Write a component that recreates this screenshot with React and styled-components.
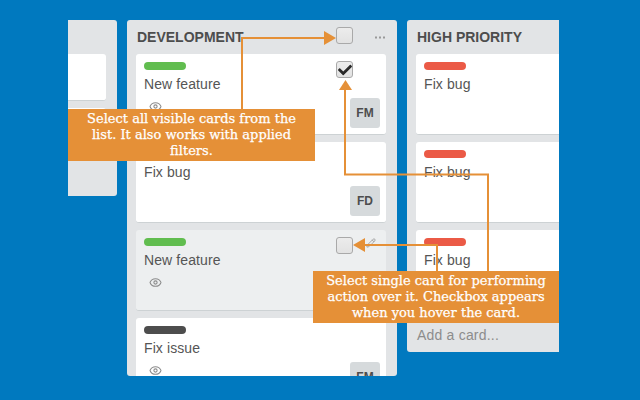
import React from "react";
import styled, { createGlobalStyle } from "styled-components";
import { FaCheck } from "react-icons/fa";
import { Eye, Pencil } from "lucide-react";

const GlobalStyle = createGlobalStyle`
    html, body {
        margin: 0;
        padding: 0;
        background: #0079bf;
    }
`;

const Stage = styled.div`
    position: relative;
    width: 640px;
    height: 400px;
    padding: 20px 0 0 68px;
    box-sizing: border-box;
    overflow: hidden;
    background: #0079bf;
    font-family: "Liberation Sans", Arial, sans-serif;
`;

const Board = styled.div`
    display: flex;
    align-items: flex-start;
    gap: 10px;
    width: 491px;
    height: 356px;
    overflow: hidden;
`;

const List = styled.section`
    flex: none;
    width: 270px;
    height: ${(p) => p.$height}px;
    margin-left: ${(p) => p.$offset || 0}px;
    border-radius: 3px;
    background: #e2e4e6;
    overflow: hidden;
`;

const ListHeader = styled.header`
    display: flex;
    align-items: center;
    height: 34px;
    padding: 0 12px 0 10px;
`;

const ListTitle = styled.h2`
    margin: 0;
    font-size: 14px;
    font-weight: bold;
    color: #4d4d4d;
`;

const Dots = styled.svg`
    width: 10px;
    height: 3px;
    margin-left: 22px;
    fill: #999;
`;

const Cards = styled.div`
    display: flex;
    flex-direction: column;
    gap: 7px;
    padding: 0 11px 0 9px;
`;

const Card = styled.article`
    position: relative;
    height: ${(p) => p.$height || 81}px;
    flex: none;
    padding: 8px;
    box-sizing: border-box;
    border-radius: 3px;
    border-bottom: 1px solid #cdd2d4;
    background: ${(p) => (p.$hover ? "#edeff0" : "#ffffff")};
`;

const Label = styled.div`
    width: 42px;
    height: 8px;
    border-radius: 4px;
    background: ${(p) => p.$color};
`;

const CardTitle = styled.div`
    margin-top: 6px;
    font-size: 14px;
    line-height: 16px;
    letter-spacing: 0.1px;
    color: #555;
`;

const Badge = styled.div`
    display: flex;
    margin: 8px 0 0 5px;
    color: #8c8c8c;
`;

const Avatar = styled.div`
    position: absolute;
    right: 6px;
    bottom: 6px;
    display: flex;
    align-items: center;
    justify-content: center;
    width: 30px;
    height: 30px;
    border-radius: 3px;
    background: #d6dadc;
    font-size: 12px;
    font-weight: bold;
    color: #4d4d4d;
`;

const Checkbox = styled.div`
    display: flex;
    align-items: center;
    justify-content: center;
    flex: none;
    width: 17px;
    height: 17px;
    box-sizing: border-box;
    border: 1px solid #a9a9a9;
    border-radius: 3px;
    background: linear-gradient(#ececec, #e2e2e2);
    color: #2a2a2a;
`;

const HeaderCheck = styled(Checkbox)`
    align-self: flex-start;
    margin: 7px 0 0 auto;
`;

const CardCheck = styled.div`
    position: absolute;
    top: 7px;
    right: 33px;
`;

const EditIcon = styled.div`
    position: absolute;
    top: 8px;
    right: 10px;
    display: flex;
    color: #9a9a9a;
`;

const AddCard = styled.div`
    margin: 16px 0 0 10px;
    font-size: 14px;
    letter-spacing: 0.2px;
    color: #8c8c8c;
`;

const Callout = styled.div`
    position: absolute;
    left: ${(p) => p.$left}px;
    top: ${(p) => p.$top}px;
    width: ${(p) => p.$width}px;
    height: 52px;
    padding: 2px 10px 0;
    box-sizing: border-box;
    background: #e59037;
    color: #fff;
    font-family: "DejaVu Serif", "Liberation Serif", serif;
    font-size: 13px;
    line-height: 16px;
    text-align: center;
    -webkit-text-stroke: 0.25px #fff;
`;

const Arrows = styled.svg`
    position: absolute;
    left: 0;
    top: 0;
    width: 640px;
    height: 400px;
    pointer-events: none;
`;

const MoreDots = () => (
    <Dots viewBox="0 0 10 3">
        <rect x="0" y="0.5" width="2" height="2" />
        <rect x="4" y="0.5" width="2" height="2" />
        <rect x="8" y="0.5" width="2" height="2" />
    </Dots>
);

const GREEN = "#61bd4f";
const RED = "#eb5a46";
const DARK = "#4d4d4d";

const TaskCard = ({ color, title, eye, initials, checked, hover }) => (
    <Card $hover={hover}>
        <Label $color={color} />
        <CardTitle>{title}</CardTitle>
        {eye && (
            <Badge>
                <Eye size={13} strokeWidth={2} />
            </Badge>
        )}
        {initials && <Avatar>{initials}</Avatar>}
        {hover && (
            <EditIcon>
                <Pencil size={10} />
            </EditIcon>
        )}
        {(checked || hover) && (
            <CardCheck>
                <Checkbox>{checked && <FaCheck size={14} />}</Checkbox>
            </CardCheck>
        )}
    </Card>
);

export default function App() {
    return (
        <Stage>
            <GlobalStyle />
            <Board>
                <List $height={176} $offset={-221}>
                    <ListHeader>
                        <MoreDots />
                    </ListHeader>
                    <Cards>
                        <Card $height={47} />
                        <Card $height={47} />
                    </Cards>
                </List>
                <List $height={356}>
                    <ListHeader>
                        <ListTitle>DEVELOPMENT</ListTitle>
                        <HeaderCheck />
                        <MoreDots />
                    </ListHeader>
                    <Cards>
                        <TaskCard color={GREEN} title="New feature" eye initials="FM" checked />
                        <TaskCard color={RED} title="Fix bug" initials="FD" />
                        <TaskCard color={GREEN} title="New feature" eye hover />
                        <TaskCard color={DARK} title="Fix issue" eye initials="FM" />
                    </Cards>
                </List>
                <List $height={332}>
                    <ListHeader>
                        <ListTitle>HIGH PRIORITY</ListTitle>
                    </ListHeader>
                    <Cards>
                        <TaskCard color={RED} title="Fix bug" />
                        <TaskCard color={RED} title="Fix bug" />
                        <TaskCard color={RED} title="Fix bug" />
                    </Cards>
                    <AddCard>Add a card...</AddCard>
                </List>
            </Board>
            <Arrows viewBox="0 0 640 400" fill="none">
                <g stroke="#e59037" strokeWidth="2">
                    <path d="M242 110V38H326" />
                    <path d="M345 88V174.500H488V272" />
                    <path d="M437 272V245H362" />
                </g>
                <g fill="#e59037">
                    <path d="M336 38L324 31V45Z" />
                    <path d="M345.500 80L339 90H352Z" />
                    <path d="M353 245L365 238V252Z" />
                </g>
            </Arrows>
            <Callout $left={68} $top={109} $width={247}>
                Select all visible cards from the list. It also works with applied filters.
            </Callout>
            <Callout $left={313} $top={271} $width={246}>
                Select single card for performing action over it. Checkbox appears when you hover the card.
            </Callout>
        </Stage>
    );
}
